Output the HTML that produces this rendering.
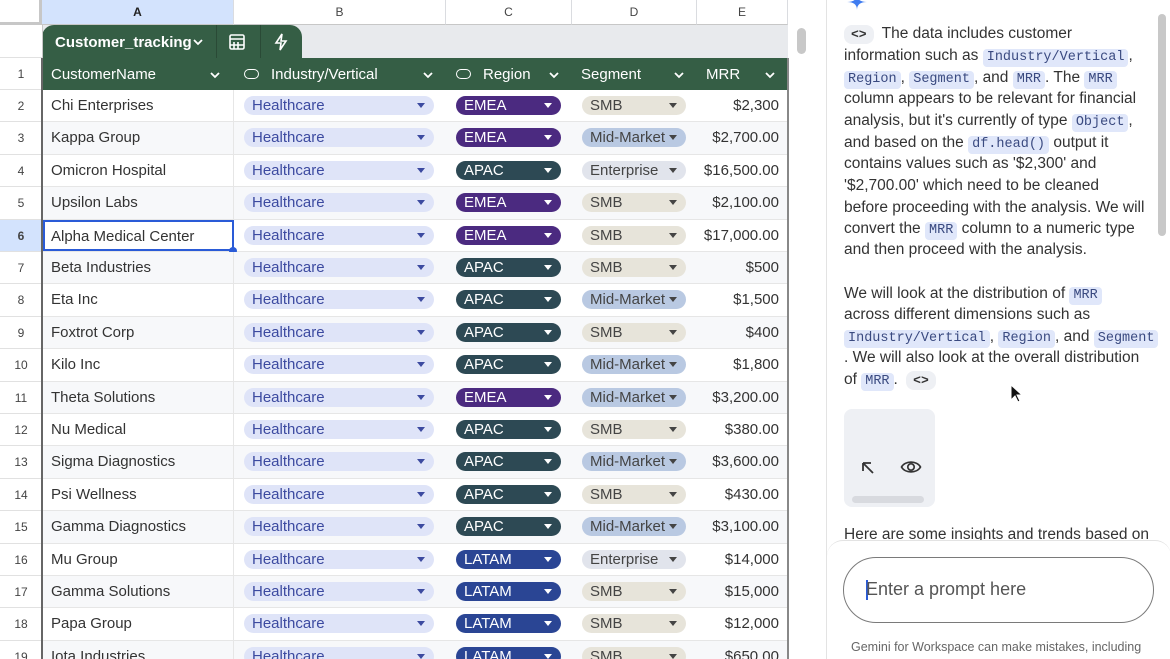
<!DOCTYPE html>
<html><head><meta charset="utf-8">
<style>
*{box-sizing:border-box;margin:0;padding:0}
html,body{width:1170px;height:659px;overflow:hidden}
body{background:#fff;font-family:"Liberation Sans",Arial,sans-serif;position:relative;color:#202124}
.colhdr{position:absolute;top:0;height:25px;border-right:1px solid #dadce0;border-bottom:1px solid #c7c7c7;font-size:12px;color:#444;text-align:center;line-height:25px;background:#fff}
.rn{position:absolute;left:0;width:42px;height:32.4px;font-size:12px;color:#444;text-align:center;line-height:32px;border-bottom:1px solid #e1e1e1;background:#fff}
.row{position:absolute;left:43px;width:745px;height:32.4px;font-size:15px;border-bottom:1px solid #e6e6e6}
.row.g{background:#f7f8fa}
.c{position:absolute;top:0;height:100%;border-right:1px solid #e6e6e6}
.name{left:0;width:191px;padding-left:8px;line-height:32px;color:#333}
.chip{position:absolute;top:6px;height:19px;border-radius:10px;font-size:15px;line-height:20px;padding-left:8px}
.chip:after{content:"";position:absolute;right:9px;top:7px;border-left:4.5px solid transparent;border-right:4.5px solid transparent;border-top:5px solid currentColor}
.ind{left:201px;width:190px;background:#dfe4f8;color:#3c4aa0}
.reg{left:413px;width:105px;color:#fff}
.emea{background:#4b2a80}.apac{background:#2d4954}.latam{background:#2a4594}
.seg{left:539px;width:104px;color:#444}
.smb{background:#e7e4da}.mid{background:#b9c9e2}.ent{background:#e1e4ec}
.mrr{position:absolute;right:9px;top:0;line-height:32px;color:#333}
.panel{position:absolute;left:826px;top:0;width:344px;height:659px;border-left:1px solid #e3e3e3;background:#fff}
.l{position:absolute;left:17px;font-size:15.5px;line-height:20px;color:#333;white-space:nowrap}
code{font-family:"Liberation Mono",monospace;font-size:13.5px;line-height:1;background:#e0e7fa;color:#3a4a80;border-radius:4px;padding:2px 4px;display:inline-block}
.ic{display:inline-block;line-height:1;background:#eef0f4;border-radius:8px;padding:3px 7px;font-family:"Liberation Mono",monospace;font-size:13px;font-weight:bold;margin-right:8px}
.chev{position:absolute;top:11px}
</style></head><body>
<div style="position:absolute;left:0;top:0;width:42px;height:25px;background:#fff;border-right:3px solid #c7c7c7;border-bottom:3px solid #c7c7c7"></div>
<div class="colhdr" style="left:42px;width:192px;background:#d3e3fd;font-weight:bold;color:#222">A</div>
<div class="colhdr" style="left:234px;width:212px">B</div>
<div class="colhdr" style="left:446px;width:126px">C</div>
<div class="colhdr" style="left:572px;width:125px">D</div>
<div class="colhdr" style="left:697px;width:91px">E</div>
<div class="colhdr" style="left:788px;width:22px;border:none"></div>
<div style="position:absolute;left:0;top:25px;width:42px;height:33px;border-bottom:1px solid #e1e1e1"></div>
<div style="position:absolute;left:42px;top:25px;width:746px;height:33px;background:#e8eaed"></div>
<div style="position:absolute;left:42px;top:25px;width:260px;height:33px;background:#355e45;border-radius:12px 12px 0 0;color:#fff;font-size:15px;font-weight:bold">
 <span style="position:absolute;left:13px;top:9px">Customer_tracking</span>
 <svg class="chev" style="left:150px;top:13px" width="12" height="8" viewBox="0 0 12 8" fill="none" stroke="#fff" stroke-width="1.8"><path d="M2 2l4 4 4-4"/></svg>
 <div style="position:absolute;left:174px;top:0;width:1px;height:33px;background:#2a4a36"></div>
 <svg style="position:absolute;left:186px;top:8px" width="18" height="18" viewBox="0 0 18 18" fill="none" stroke="#fff" stroke-width="1.6"><rect x="2" y="2" width="14" height="14" rx="1.5"/><path d="M2 6h14M6 9v7M10 9v7M2 12h14"/></svg>
 <div style="position:absolute;left:218px;top:0;width:1px;height:33px;background:#2a4a36"></div>
 <svg style="position:absolute;left:231px;top:8px" width="16" height="18" viewBox="0 0 16 18" fill="none" stroke="#fff" stroke-width="1.6"><path d="M9 1L3 10h5l-1 7 6-9H8z"/></svg>
</div>
<div style="position:absolute;left:0;top:58px;width:42px;height:32px;font-size:12px;color:#444;text-align:center;line-height:32px;border-bottom:1px solid #e1e1e1">1</div>
<div style="position:absolute;left:42px;top:58px;width:746px;height:32px;background:#355e45;color:#fff;font-size:15px">
 <span style="position:absolute;left:9px;top:8px">CustomerName</span>
 <svg class="chev" style="left:167px;top:13px" width="12" height="8" viewBox="0 0 12 8" fill="none" stroke="#fff" stroke-width="1.8"><path d="M2 2l4 4 4-4"/></svg>
 <span style="position:absolute;left:202px;top:11px;width:15px;height:10px;border:1.6px solid #fff;border-radius:5px"></span>
 <span style="position:absolute;left:229px;top:8px">Industry/Vertical</span>
 <svg class="chev" style="left:380px;top:13px" width="12" height="8" viewBox="0 0 12 8" fill="none" stroke="#fff" stroke-width="1.8"><path d="M2 2l4 4 4-4"/></svg>
 <span style="position:absolute;left:414px;top:11px;width:15px;height:10px;border:1.6px solid #fff;border-radius:5px"></span>
 <span style="position:absolute;left:441px;top:8px">Region</span>
 <svg class="chev" style="left:506px;top:13px" width="12" height="8" viewBox="0 0 12 8" fill="none" stroke="#fff" stroke-width="1.8"><path d="M2 2l4 4 4-4"/></svg>
 <span style="position:absolute;left:539px;top:8px">Segment</span>
 <svg class="chev" style="left:631px;top:13px" width="12" height="8" viewBox="0 0 12 8" fill="none" stroke="#fff" stroke-width="1.8"><path d="M2 2l4 4 4-4"/></svg>
 <span style="position:absolute;left:664px;top:8px">MRR</span>
 <svg class="chev" style="left:722px;top:13px" width="12" height="8" viewBox="0 0 12 8" fill="none" stroke="#fff" stroke-width="1.8"><path d="M2 2l4 4 4-4"/></svg>
</div>

<div class="rn" style="top:90px">2</div><div class="row" style="top:90px"><div class="c name">Chi Enterprises</div><div class="chip ind">Healthcare</div><div class="chip reg emea">EMEA</div><div class="chip seg smb">SMB</div><div class="mrr">$2,300</div></div>
<div class="rn" style="top:122.4px">3</div><div class="row g" style="top:122.4px"><div class="c name">Kappa Group</div><div class="chip ind">Healthcare</div><div class="chip reg emea">EMEA</div><div class="chip seg mid">Mid-Market</div><div class="mrr">$2,700.00</div></div>
<div class="rn" style="top:154.8px">4</div><div class="row" style="top:154.8px"><div class="c name">Omicron Hospital</div><div class="chip ind">Healthcare</div><div class="chip reg apac">APAC</div><div class="chip seg ent">Enterprise</div><div class="mrr">$16,500.00</div></div>
<div class="rn" style="top:187.2px">5</div><div class="row g" style="top:187.2px"><div class="c name">Upsilon Labs</div><div class="chip ind">Healthcare</div><div class="chip reg emea">EMEA</div><div class="chip seg smb">SMB</div><div class="mrr">$2,100.00</div></div>
<div class="rn" style="top:219.6px;background:#d3e3fd;font-weight:bold">6</div><div class="row" style="top:219.6px"><div class="c name" style="border:2px solid #2a5bd7;line-height:29px;padding-left:6px">Alpha Medical Center</div><div style="position:absolute;left:186px;top:27px;width:8px;height:8px;border-radius:50%;background:#2a5bd7"></div><div class="chip ind">Healthcare</div><div class="chip reg emea">EMEA</div><div class="chip seg smb">SMB</div><div class="mrr">$17,000.00</div></div>
<div class="rn" style="top:252px">7</div><div class="row g" style="top:252px"><div class="c name">Beta Industries</div><div class="chip ind">Healthcare</div><div class="chip reg apac">APAC</div><div class="chip seg smb">SMB</div><div class="mrr">$500</div></div>
<div class="rn" style="top:284.4px">8</div><div class="row" style="top:284.4px"><div class="c name">Eta Inc</div><div class="chip ind">Healthcare</div><div class="chip reg apac">APAC</div><div class="chip seg mid">Mid-Market</div><div class="mrr">$1,500</div></div>
<div class="rn" style="top:316.8px">9</div><div class="row g" style="top:316.8px"><div class="c name">Foxtrot Corp</div><div class="chip ind">Healthcare</div><div class="chip reg apac">APAC</div><div class="chip seg smb">SMB</div><div class="mrr">$400</div></div>
<div class="rn" style="top:349.2px">10</div><div class="row" style="top:349.2px"><div class="c name">Kilo Inc</div><div class="chip ind">Healthcare</div><div class="chip reg apac">APAC</div><div class="chip seg mid">Mid-Market</div><div class="mrr">$1,800</div></div>
<div class="rn" style="top:381.6px">11</div><div class="row g" style="top:381.6px"><div class="c name">Theta Solutions</div><div class="chip ind">Healthcare</div><div class="chip reg emea">EMEA</div><div class="chip seg mid">Mid-Market</div><div class="mrr">$3,200.00</div></div>
<div class="rn" style="top:414px">12</div><div class="row" style="top:414px"><div class="c name">Nu Medical</div><div class="chip ind">Healthcare</div><div class="chip reg apac">APAC</div><div class="chip seg smb">SMB</div><div class="mrr">$380.00</div></div>
<div class="rn" style="top:446.4px">13</div><div class="row g" style="top:446.4px"><div class="c name">Sigma Diagnostics</div><div class="chip ind">Healthcare</div><div class="chip reg apac">APAC</div><div class="chip seg mid">Mid-Market</div><div class="mrr">$3,600.00</div></div>
<div class="rn" style="top:478.8px">14</div><div class="row" style="top:478.8px"><div class="c name">Psi Wellness</div><div class="chip ind">Healthcare</div><div class="chip reg apac">APAC</div><div class="chip seg smb">SMB</div><div class="mrr">$430.00</div></div>
<div class="rn" style="top:511.2px">15</div><div class="row g" style="top:511.2px"><div class="c name">Gamma Diagnostics</div><div class="chip ind">Healthcare</div><div class="chip reg apac">APAC</div><div class="chip seg mid">Mid-Market</div><div class="mrr">$3,100.00</div></div>
<div class="rn" style="top:543.6px">16</div><div class="row" style="top:543.6px"><div class="c name">Mu Group</div><div class="chip ind">Healthcare</div><div class="chip reg latam">LATAM</div><div class="chip seg ent">Enterprise</div><div class="mrr">$14,000</div></div>
<div class="rn" style="top:576px">17</div><div class="row g" style="top:576px"><div class="c name">Gamma Solutions</div><div class="chip ind">Healthcare</div><div class="chip reg latam">LATAM</div><div class="chip seg smb">SMB</div><div class="mrr">$15,000</div></div>
<div class="rn" style="top:608.4px">18</div><div class="row" style="top:608.4px"><div class="c name">Papa Group</div><div class="chip ind">Healthcare</div><div class="chip reg latam">LATAM</div><div class="chip seg smb">SMB</div><div class="mrr">$12,000</div></div>
<div class="rn" style="top:640.8px">19</div><div class="row g" style="top:640.8px"><div class="c name">Iota Industries</div><div class="chip ind">Healthcare</div><div class="chip reg latam">LATAM</div><div class="chip seg smb">SMB</div><div class="mrr">$650.00</div></div>

<div style="position:absolute;left:41px;top:58px;width:2px;height:601px;background:#666"></div>
<div style="position:absolute;left:787px;top:58px;width:1.5px;height:601px;background:#888"></div>
<div style="position:absolute;left:42px;top:25px;width:1px;height:33px;background:#c7c7c7"></div>
<div style="position:absolute;left:797px;top:28px;width:9px;height:26px;border-radius:5px;background:#c8c8c8"></div>

<div class="panel">
 <svg style="position:absolute;left:20px;top:-6px" width="20" height="16" viewBox="0 0 20 16"><path d="M10 0C10 6 6 8 0 8C6 8 10 10 10 16C10 10 14 8 20 8C14 8 10 6 10 0Z" fill="#3f7cf0"/></svg>
 <div style="position:absolute;right:4px;top:14px;width:8px;height:222px;border-radius:4px;background:#c8c8c8"></div>
 <div class="l" style="top:24px"><span class="ic">&lt;&gt;</span>The data includes customer</div>
 <div class="l" style="top:46px">information such as <code>Industry/Vertical</code>,</div>
 <div class="l" style="top:68px"><code>Region</code>, <code>Segment</code>, and <code>MRR</code>. The <code>MRR</code></div>
 <div class="l" style="top:89px">column appears to be relevant for financial</div>
 <div class="l" style="top:111px">analysis, but it's currently of type <code>Object</code>,</div>
 <div class="l" style="top:133px">and based on the <code>df.head()</code> output it</div>
 <div class="l" style="top:154px">contains values such as '$2,300' and</div>
 <div class="l" style="top:176px">'$2,700.00' which need to be cleaned</div>
 <div class="l" style="top:198px">before proceeding with the analysis. We will</div>
 <div class="l" style="top:219px">convert the <code>MRR</code> column to a numeric type</div>
 <div class="l" style="top:240px">and then proceed with the analysis.</div>
 <div class="l" style="top:284px">We will look at the distribution of <code>MRR</code></div>
 <div class="l" style="top:305px">across different dimensions such as</div>
 <div class="l" style="top:327px"><code>Industry/Vertical</code>, <code>Region</code>, and <code>Segment</code></div>
 <div class="l" style="top:348px">. We will also look at the overall distribution</div>
 <div class="l" style="top:370px">of <code>MRR</code>. <span class="ic" style="margin-left:4px">&lt;&gt;</span></div>
 <svg style="position:absolute;left:183px;top:384px" width="14" height="20" viewBox="0 0 14 20"><path d="M1 1v15l4-4 3 6 2-1-3-6h5z" fill="#111" stroke="#fff" stroke-width="1"/></svg>
 <div style="position:absolute;left:17px;top:409px;width:91px;height:98px;background:#eef0f4;border-radius:8px">
  <svg style="position:absolute;left:16px;top:51px" width="16" height="16" viewBox="0 0 16 16" fill="none" stroke="#333" stroke-width="1.8"><path d="M13 13L3 3M3 3v8M3 3h8"/></svg>
  <svg style="position:absolute;left:56px;top:50px" width="22" height="16" viewBox="0 0 22 16" fill="none" stroke="#333" stroke-width="1.7"><path d="M1.5 8C5 1.5 17 1.5 20.5 8C17 14.5 5 14.5 1.5 8Z"/><circle cx="11" cy="8" r="3.2"/></svg>
  <div style="position:absolute;left:8px;top:87px;width:72px;height:7px;border-radius:4px;background:#d8dadf"></div>
 </div>
 <div class="l" style="top:525px">Here are some insights and trends based on</div>
 <div style="position:absolute;left:0;top:540px;width:344px;height:119px;background:#fff;border-top:1px solid #e3e3e3;border-radius:16px 16px 0 0"></div>
 <div style="position:absolute;left:16px;top:557px;width:311px;height:66px;border:1.5px solid #7a7a7a;border-radius:33px">
  <div style="position:absolute;left:22px;top:22px;width:1.5px;height:20px;background:#2a5bd7"></div>
  <span style="position:absolute;left:22px;top:21px;font-size:18px;color:#555">Enter a prompt here</span>
 </div>
 <div style="position:absolute;left:24px;top:640px;font-size:12.5px;color:#666">Gemini for Workspace can make mistakes, including</div>
</div>
</body></html>
